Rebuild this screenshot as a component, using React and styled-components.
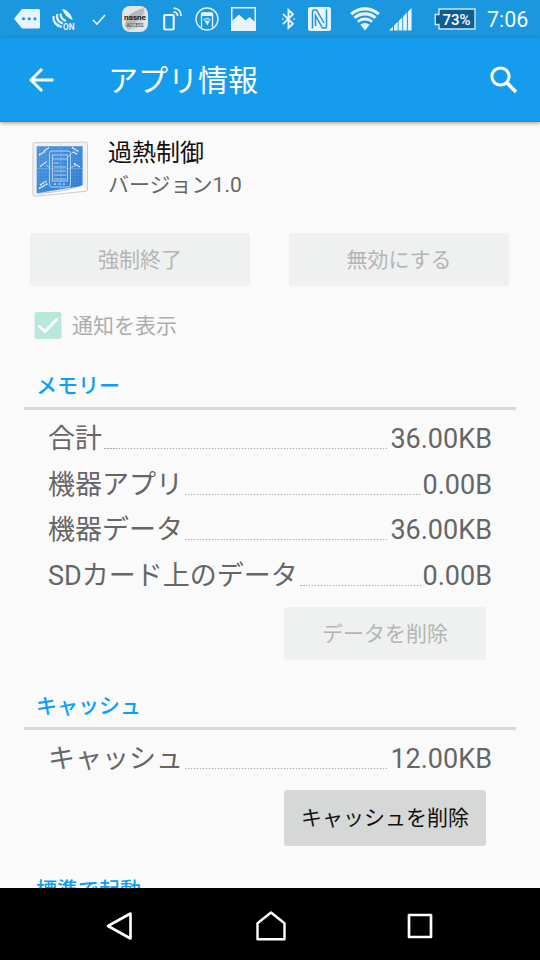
import styled, { createGlobalStyle } from 'styled-components';

const memoryRows = [
  { label: '合計', value: '36.00KB' },
  { label: '機器アプリ', value: '0.00B' },
  { label: '機器データ', value: '36.00KB' },
  { label: 'SDカード上のデータ', value: '0.00B' },
];

const cacheRows = [{ label: 'キャッシュ', value: '12.00KB' }];

const StatusBar = () => (
  <StyledStatusBar>
    <StatusIcon width='26' height='20' $left={14}>
      <path d='M8 0h16.500q1.500 0 1.500 1.500v16.500q0 1.500-1.500 1.500H8L0 9.750z' fill='#e8f4fc' />
      <circle cx='9.500' cy='9.750' r='1.600' fill='#1a97de' />
      <circle cx='15.200' cy='9.750' r='1.600' fill='#1a97de' />
      <circle cx='20.900' cy='9.750' r='1.600' fill='#1a97de' />
    </StatusIcon>
    <StatusIcon width='24' height='24' $left={12}>
      <path d='M10 2C15 2 20 8 20.500 13C16 11 12 7 10 2z' fill='#e8f4fc' />
      <g fill='none' stroke='#e8f4fc' strokeWidth='2.200'>
        <path d='M8.500 6.500C8.500 10.500 11 13 14 14' />
        <path d='M5 7C4.500 12 7 15.500 11 16.500' />
        <path d='M1.500 9C1 14 3.500 18.500 10 20' />
      </g>
      <text x='11' y='22.500' fontSize='8.500' fontWeight='700' textLength='11.500' lengthAdjust='spacingAndGlyphs' fill='#e8f4fc'>ON</text>
    </StatusIcon>
    <StatusIcon width='14' height='13' $left={16}>
      <path d='M1 7l4 4L13 2' fill='none' stroke='#e8f4fc' strokeWidth='1.600' />
    </StatusIcon>
    <StatusIcon width='26' height='26' $left={16}>
      <rect width='26' height='26' rx='8' fill='#e3e5e6' />
      <path d='M3 20C3 10 10 5 22 2C22 13 16 21 6 24z' fill='#b5b9bb' />
      <path d='M5 25C11 19 17 13 23 5C22 17 17 23 5 25z' fill='#cfd2d3' />
      <text x='13' y='14' fontSize='7' fontWeight='700' textAnchor='middle' textLength='22' lengthAdjust='spacingAndGlyphs' fill='#222'>nasne</text>
      <rect x='9' y='10.300' width='2' height='1.500' fill='#d22' />
      <text x='13' y='20.500' fontSize='5' textAnchor='middle' textLength='17' lengthAdjust='spacingAndGlyphs' fill='#333'>ACCESS</text>
    </StatusIcon>
    <StatusIcon width='20' height='24' $left={15}>
      <g fill='none' stroke='#e8f4fc' strokeWidth='1.800'>
        <rect x='1.200' y='8' width='9.500' height='14.500' rx='1' strokeWidth='2.200' />
        <path d='M10.500 4.800C13 5 14.500 6.500 14.700 9' />
        <path d='M10.500 1.200C15 1.300 18 4.500 18.200 9' />
      </g>
    </StatusIcon>
    <StatusIcon width='24' height='24' $left={12}>
      <g fill='none' stroke='#e8f4fc'>
        <circle cx='12' cy='12' r='11' strokeWidth='1.300' />
        <path d='M6.500 20V7q0-1.200 1.200-1.200h8.600q1.200 0 1.200 1.200v13' strokeWidth='1.300' />
        <path d='M8.500 12.500q3.500-2 7 0M10 14.500q2-1 4 0' />
      </g>
      <path d='M6.500 5.800h11V9h-11zM9 13l3.500 5.500L15 13l-2.500 1.500z' fill='#e8f4fc' />
    </StatusIcon>
    <StatusIcon width='25' height='24' $left={12}>
      <rect x='.75' y='.75' width='23.500' height='22.500' fill='none' stroke='#e8f4fc' strokeWidth='1.500' />
      <path d='M1 14l7-6.500 6.500 6 4-3.500 5.500 5V23H1z' fill='#e8f4fc' />
    </StatusIcon>
    <StatusIcon width='14' height='22' $left={25}>
      <path d='M2 5.800l10 10L7.500 20V2l4.500 4.200-10 10' fill='none' stroke='#e8f4fc' strokeWidth='1.900' />
      <path d='M1 11h1.500M12.300 11h1.500' stroke='#e8f4fc' strokeWidth='1.700' />
    </StatusIcon>
    <StatusIcon width='23' height='24' $left={13}>
      <rect width='23' height='24' rx='2.500' fill='#e8f4fc' />
      <path d='M4.500 21.500V4.500q0-1.500 1.500-1.500h2.500L16 16M18.500 2.500v17q0 1.500-1.500 1.500h-2.500L7.500 8.500V19' fill='none' stroke='#1a97de' strokeWidth='1.500' />
    </StatusIcon>
    <StatusIcon width='30' height='24' $left={19}>
      <path d='M10.400 17.700A7 7 0 0 1 19.600 17.700L15 23.500z' fill='#e8f4fc' />
      <g fill='none' stroke='#e8f4fc' strokeWidth='3.200'>
        <path d='M1.200 7.100A21 21 0 0 1 28.800 7.100' />
        <path d='M4.500 10.900A16 16 0 0 1 25.500 10.900' />
        <path d='M7.800 14.700A11 11 0 0 1 22.200 14.700' strokeWidth='2.800' />
      </g>
    </StatusIcon>
    <StatusIcon width='23' height='24' $left={9}>
      <path d='M0 23.500l4-4v4zM5 18.500l3.700-3.700v8.700H5zM9.600 13.900l3.700-3.700v13.300H9.600zM14.200 9.300l3.700-3.700v17.900h-3.700zM18.900 4.600L22.600 1v22.500h-3.700z' fill='#e8f4fc' />
    </StatusIcon>
    <StatusIcon width='42' height='22' $left={22}>
      <path d='M5 1h36v20H5v-4.500H1.200v-10H5z' fill='#0e5e92' stroke='#c9e6f7' strokeWidth='1.400' />
      <text x='22.500' y='16.500' fontSize='15.500' fontWeight='500' textAnchor='middle' textLength='28' lengthAdjust='spacingAndGlyphs' fill='#fff'>73%</text>
    </StatusIcon>
    <Clock>7:06</Clock>
  </StyledStatusBar>
);

const AppIcon = () => (
  <svg width='60' height='60' viewBox='0 0 60 60'>
    <defs>
      <linearGradient id='paper' x1='0' y1='0' x2='1' y2='1'>
        <stop offset='0' stopColor='#4a93de' />
        <stop offset='.5' stopColor='#3c88da' />
        <stop offset='1' stopColor='#2c7cd2' />
      </linearGradient>
      <pattern id='grid' width='3' height='3' patternUnits='userSpaceOnUse'>
        <path d='M0 .5h3M.5 0v3' stroke='#8fbdec' strokeWidth='.4' opacity='.3' />
      </pattern>
    </defs>
    <path d='M3 4.500Q3 3.700 4 3.700L56.500 3.200Q57.500 3.200 57.500 4.200V51Q57.500 52 56 52.300L5 57.300Q2.800 57.500 2.800 55.500z' fill='#f1f1f1' stroke='#c9c9c9' strokeWidth='.9' />
    <path d='M6.700 7.300H52.600V46.700L6.700 54.300z' fill='url(#paper)' />
    <path d='M6.700 7.300H52.600V46.700L6.700 54.300z' fill='url(#grid)' />
    <path d='M31 4v46M6.700 29.500h46' stroke='#9cc4ea' strokeWidth='.6' opacity='.6' />
    <g fill='none' stroke='#b9d7f5' strokeWidth='.9'>
      <rect x='19.500' y='12' width='21' height='36' rx='2.500' />
      <rect x='22.500' y='16' width='15' height='26' />
      <path d='M22.500 20h15M24 24h5M24 28h12M24 32h12M24 36h12M24 40h12M20 29l-4-3M41 29l5-3M38 18l5-5' />
      <path d='M24 45h12' strokeDasharray='2 2.500' strokeWidth='1.500' />
    </g>
    <g stroke='#e2effc' strokeWidth='1.500' strokeDasharray='2 .6'>
      <path d='M9 16l6-3.500M14 12l5-3.500M10 27.500l7-5M9 49.500l9-5M10 46l7-4M42 8.500l7 4M43 13l4 2M44 24.500l6 3.500' />
    </g>
    <path d='M10 55Q38 53.500 52.600 46Q53.500 50 57 50Q40 54.500 10 55z' fill='#fff' />
    <path d='M8 54.300Q37 52.500 52.600 46' fill='none' stroke='#1e5fa5' strokeWidth='.7' opacity='.4' />
  </svg>
);

const SizeRow = ({ label, value }) => (
  <StyledRow>
    <span>{label}</span>
    <Leader />
    <span>{value}</span>
  </StyledRow>
);

export default function App() {
  return (
    <>
      <GlobalStyle />
      <Screen>
        <StatusBar />

        <AppBar>
          <svg width='26' height='26' viewBox='0 0 26 26'>
            <path d='M24.500 13H2.500M13 2L2 13l11 11' fill='none' stroke='#fff' strokeWidth='2.900' />
          </svg>
          <h1>アプリ情報</h1>
          <svg width='28' height='28' viewBox='0 0 28 28'>
            <circle cx='10.500' cy='10.500' r='8.600' fill='none' stroke='#fff' strokeWidth='3' />
            <path d='M16.800 16.800L26 26' stroke='#fff' strokeWidth='3.600' />
          </svg>
        </AppBar>

        <Content>
          <AppHeader>
            <AppIcon />
            <div>
              <h2>過熱制御</h2>
              <p>バージョン1.0</p>
            </div>
          </AppHeader>

          <Actions>
            <Button disabled>強制終了</Button>
            <Button disabled>無効にする</Button>
          </Actions>

          <CheckRow>
            <svg width='28' height='28' viewBox='0 0 28 28'>
              <rect x='.5' y='0' width='27' height='27' rx='2.500' fill='#b9e7dc' />
              <path d='M4.500 13.500l6.500 6L23.500 6.500' fill='none' stroke='#fff' strokeWidth='2.800' />
            </svg>
            <span>通知を表示</span>
          </CheckRow>

          <Section $height={320}>
            <h3>メモリー</h3>
            <Rows>
              {memoryRows.map((row) => (
                <SizeRow key={row.label} {...row} />
              ))}
            </Rows>
            <Button disabled $end>
              データを削除
            </Button>
          </Section>

          <Section $height={184}>
            <h3>キャッシュ</h3>
            <Rows>
              {cacheRows.map((row) => (
                <SizeRow key={row.label} {...row} />
              ))}
            </Rows>
            <Button $end>キャッシュを削除</Button>
          </Section>

          <Section $height={60}>
            <h3>標準で起動</h3>
          </Section>
        </Content>

        <NavBar>
          <svg width='30' height='30' viewBox='0 0 30 30'>
            <path d='M25.500 2.500v25L3 15z' fill='none' stroke='#fff' strokeWidth='2.600' strokeLinejoin='round' />
          </svg>
          <svg width='32' height='32' viewBox='0 0 32 32'>
            <path d='M2.500 13.300L16 2.500l13.500 10.800v15.900h-27z' fill='none' stroke='#fff' strokeWidth='2.400' strokeLinejoin='round' />
          </svg>
          <svg width='26' height='26' viewBox='0 0 26 26'>
            <rect x='2' y='2' width='22' height='22' fill='none' stroke='#fff' strokeWidth='2.700' strokeLinejoin='round' />
          </svg>
        </NavBar>
      </Screen>
    </>
  );
}

const GlobalStyle = createGlobalStyle`
  * {
    box-sizing: border-box;
  }
  body, h1, h2, h3, p {
    margin: 0;
  }
  body {
    background: #fafafa;
  }
`;

const Screen = styled.div`
  display: flex;
  flex-direction: column;
  width: 540px;
  height: 960px;
  overflow: hidden;
  background: #fafafa;
  font-family: Roboto, 'Noto Sans CJK JP', sans-serif;
  color: #666;

  svg {
    flex: none;
    display: block;
  }
`;

const StyledStatusBar = styled.div`
  display: flex;
  align-items: center;
  flex: none;
  height: 38px;
  background: #1a97de;
`;

const StatusIcon = styled.svg`
  margin-left: ${({ $left }) => $left}px;
  overflow: visible;
`;

const Clock = styled.span`
  margin-left: 11px;
  font-size: 21.5px;
  color: #eef8ff;
`;

const AppBar = styled.header`
  display: flex;
  align-items: center;
  flex: none;
  height: 84px;
  padding: 0 22px 0 29px;
  background: #159cec;
  border-bottom: 1px solid #0c90e0;
  box-shadow: 0 1px 4px rgba(90, 50, 20, 0.5);
  z-index: 1;

  h1 {
    flex: 1;
    margin-left: 53px;
    padding-bottom: 4px;
    font-size: 30px;
    font-weight: 400;
    color: #fff;
  }
`;

const Content = styled.main`
  flex: 1;
  min-height: 0;
  overflow: hidden;
`;

const AppHeader = styled.div`
  display: flex;
  height: 111px;
  padding: 17px 0 0 30px;

  h2 {
    margin: -2px 0 0 18px;
    font-size: 24px;
    line-height: 32px;
    font-weight: 400;
    color: #111;
  }
  p {
    margin-left: 18px;
    font-size: 21px;
    line-height: 32px;
  }
`;

const Actions = styled.div`
  display: grid;
  grid-template-columns: 220px 220px;
  gap: 39px;
  padding-left: 30px;
`;

const Button = styled.button`
  display: block;
  width: ${({ $end }) => ($end ? '202px' : '100%')};
  height: ${({ disabled }) => (disabled ? 53 : 56)}px;
  margin: ${({ $end, disabled }) => ($end ? `${disabled ? 9 : 8}px 0 0 260px` : '0')};
  padding: 0 0 ${({ disabled }) => (disabled ? 3 : 4)}px;
  border: 0;
  border-radius: 3px;
  background: ${({ disabled }) => (disabled ? '#eff1f0' : '#d6d8d7')};
  color: ${({ disabled }) => (disabled ? '#b4b5b4' : '#111')};
  font-family: inherit;
  font-size: 21px;
`;

const CheckRow = styled.div`
  display: flex;
  align-items: center;
  gap: 10px;
  height: 79px;
  padding-left: 34px;
  font-size: 21px;
  color: #adadad;

  span {
    padding-bottom: 3px;
  }
`;

const Section = styled.section`
  height: ${({ $height }) => $height}px;
  margin: 0 24px;

  h3 {
    height: 45px;
    padding-left: 12px;
    border-bottom: 3px solid #d8d8d8;
    font-size: 21px;
    line-height: 42px;
    font-weight: 500;
    color: #0a9ffb;
  }
`;

const Rows = styled.div`
  padding: 6px 24px 0;
`;

const StyledRow = styled.div`
  display: flex;
  height: 45.5px;
  font-size: 27px;
  line-height: 47px;
  white-space: nowrap;
`;

const Leader = styled.div`
  flex: 1;
  height: 1px;
  margin: 32px 2px 0;
  background: repeating-linear-gradient(to right, #aaa 0 1.5px, #ededed 1.5px 3px);
`;

const NavBar = styled.nav`
  display: flex;
  align-items: center;
  justify-content: center;
  gap: 120px;
  flex: none;
  height: 72px;
  padding: 4px 3px 0 0;
  background: #000;
`;
